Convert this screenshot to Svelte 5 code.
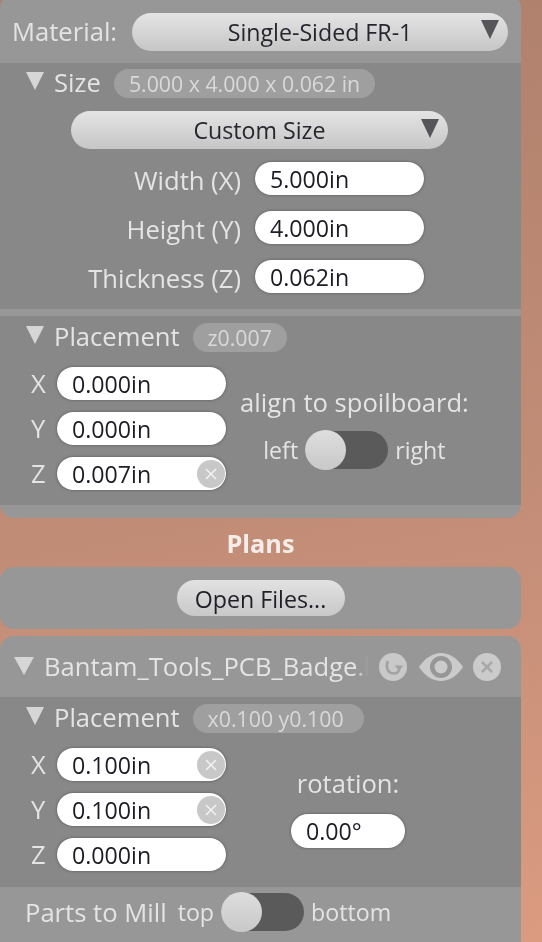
<script>
    const sizeRows = [
        { label: "Width (X)", value: "5.000in" },
        { label: "Height (Y)", value: "4.000in" },
        { label: "Thickness (Z)", value: "0.062in" },
    ];
    const boardPlacement = [
        { label: "X", value: "0.000in" },
        { label: "Y", value: "0.000in" },
        { label: "Z", value: "0.007in", clear: true },
    ];
    const planPlacement = [
        { label: "X", value: "0.100in", clear: true },
        { label: "Y", value: "0.100in", clear: true },
        { label: "Z", value: "0.000in" },
    ];
</script>

{#snippet clearIcon(cls)}
    <svg class={cls} viewBox="0 0 28 28" aria-hidden="true">
        <circle cx="14" cy="14" r="14" />
        <path d="M9 9l10 10M19 9L9 19" />
    </svg>
{/snippet}

{#snippet sectionHead(title, summary)}
    <div class="section-head">
        <span class="tri"></span>
        <span class="title">{title}</span>
        <span class="pill">{summary}</span>
    </div>
{/snippet}

{#snippet xyz(rows)}
    <div class="xyz">
        {#each rows as row}
            <div class="xyz-row">
                <span class="axis">{row.label}</span>
                <div class="field">
                    {row.value}
                    {#if row.clear}
                        {@render clearIcon("clear")}
                    {/if}
                </div>
            </div>
        {/each}
    </div>
{/snippet}

<div class="sidebar">
    <section class="panel first">
        <div class="material">
            <span>Material:</span>
            <div class="select wide">Single-Sided FR-1<i></i></div>
        </div>
        <div class="inner size">
            {@render sectionHead("Size", "5.000 x 4.000 x 0.062 in")}
            <div class="select custom">Custom Size<i></i></div>
            {#each sizeRows as row}
                <div class="size-row">
                    <span class="size-label">{row.label}</span>
                    <div class="field">{row.value}</div>
                </div>
            {/each}
        </div>
        <div class="inner placement">
            {@render sectionHead("Placement", "z0.007")}
            <div class="place-body">
                {@render xyz(boardPlacement)}
                <div class="align">
                    <span>align to spoilboard:</span>
                    <div class="toggle-row">
                        <span class="end">left</span>
                        <div class="toggle"><b></b></div>
                        <span class="end">right</span>
                    </div>
                </div>
            </div>
        </div>
    </section>

    <h2>Plans</h2>

    <section class="panel open">
        <button>Open Files...</button>
    </section>

    <section class="panel plan">
        <div class="plan-head">
            <span class="tri big"></span>
            <span class="name">Bantam_Tools_PCB_Badge.brd</span>
            <svg class="ico" viewBox="0 0 28 28" aria-hidden="true">
                <circle cx="14" cy="14" r="14" fill="#c9c9c9" />
                <path d="M9 8C6.500 13 8 20.500 15 20.500c3 0 5-2 5.500-5" fill="none" stroke="#a2a2a2" stroke-width="2.600" />
                <path d="M15.500 12.500h9l-4.500 5z" fill="#a2a2a2" />
            </svg>
            <svg class="eye" viewBox="0 0 44 28" aria-hidden="true">
                <path d="M0 14C6 5 14 0 22 0s16 5 22 14c-6 9-14 14-22 14S6 23 0 14z" fill="#cbcbcb" />
                <circle cx="22" cy="14" r="11" fill="#979797" />
                <circle cx="22" cy="14" r="6.500" fill="#cbcbcb" />
            </svg>
            {@render clearIcon("ico head-clear")}
        </div>
        <div class="inner plan-place">
            {@render sectionHead("Placement", "x0.100 y0.100\u00a0")}
            <div class="place-body">
                {@render xyz(planPlacement)}
                <div class="rotation">
                    <span>rotation:</span>
                    <div class="field small">0.00°</div>
                </div>
            </div>
        </div>
        <div class="parts">
            <span class="parts-label">Parts to Mill</span>
            <span class="end">top</span>
            <div class="toggle"><b></b></div>
            <span class="end">bottom</span>
        </div>
    </section>
</div>

<style>
    :global(body) {
        margin: 0;
        height: 942px;
        overflow: hidden;
        background: linear-gradient(170deg, #ad7f6b 0%, #c48e78 60%, #db9b81 100%);
    }

    .sidebar {
        width: 521px;
        font-family: "Open Sans", "Noto Sans", sans-serif;
        font-size: 25.600px;
        line-height: 31px;
        color: #e4e4e4;
        filter: blur(0.5px);
    }

    .panel {
        background: #979797;
        border-radius: 14px;
        overflow: hidden;
    }

    .first {
        margin-top: -6px;
        height: 524px;
    }

    .material {
        height: 69px;
        padding: 6px 13px 0 12px;
        box-sizing: border-box;
        display: flex;
        align-items: center;
        gap: 15px;
    }

    .select {
        position: relative;
        height: 38px;
        border-radius: 19px;
        background: linear-gradient(#e4e4e4, #c6c6c6);
        color: #26262e;
        text-align: center;
        line-height: 38px;
        font-size: 23.200px;
        box-sizing: border-box;
    }

    .select i {
        position: absolute;
        right: 9px;
        top: 7.500px;
        border-left: 9.500px solid transparent;
        border-right: 9.500px solid transparent;
        border-top: 19px solid #55555a;
    }

    .wide {
        flex: 1;
    }

    .custom {
        width: 377px;
        margin: 13px 0 13px 71px;
    }

    .inner {
        background: #888;
        box-sizing: border-box;
    }

    .size {
        height: 246px;
        padding-top: 6px;
    }

    .placement {
        height: 189px;
        margin-top: 7px;
        padding-top: 7px;
    }

    .section-head {
        height: 29px;
        display: flex;
        align-items: center;
        padding-left: 26px;
    }

    .tri {
        width: 0;
        height: 0;
        border-left: 9px solid transparent;
        border-right: 9px solid transparent;
        border-top: 18px solid #d6d6d6;
        margin-top: -6px;
    }

    .title {
        margin-left: 10px;
        margin-top: -3px;
    }

    .pill {
        margin-left: 13px;
        height: 29px;
        padding: 0 15px;
        border-radius: 15px;
        background: #9f9f9f;
        color: #d9d9d9;
        font-size: 21.300px;
        line-height: 30px;
        white-space: pre;
    }

    .size-row {
        display: grid;
        grid-template-columns: 241px 169px;
        column-gap: 14px;
        align-items: center;
        margin-bottom: 16px;
    }

    .size-label {
        text-align: right;
        height: 33px;
        line-height: 37px;
    }

    .field {
        position: relative;
        width: 169px;
        height: 33px;
        box-sizing: border-box;
        padding-left: 15px;
        border-radius: 17px;
        background: #fff;
        box-shadow: 0 0 3px #555;
        color: #1c1c24;
        font-size: 23.200px;
        line-height: 34px;
    }

    .field.small {
        width: 114px;
        height: 34px;
    }

    .clear {
        position: absolute;
        right: 1px;
        top: 2.500px;
        width: 28px;
        height: 28px;
    }

    .clear circle {
        fill: #c8c8c8;
    }

    .clear path {
        fill: none;
        stroke: #f0f0f0;
        stroke-width: 1.700;
    }

    .place-body {
        display: flex;
        padding: 15px 0 0 31px;
    }

    .xyz {
        display: flex;
        flex-direction: column;
        gap: 12px;
    }

    .xyz-row {
        display: flex;
        align-items: center;
    }

    .axis {
        width: 26px;
    }

    .align {
        margin-left: 14px;
        display: flex;
        flex-direction: column;
        align-items: center;
        padding-top: 20px;
    }

    .toggle-row {
        display: flex;
        align-items: center;
        gap: 7px;
        margin-top: 13px;
    }

    .end {
        font-size: 23.200px;
    }

    .toggle {
        position: relative;
        width: 83px;
        height: 38px;
        border-radius: 19px;
        background: #5a5a5a;
        flex: none;
    }

    .toggle b {
        position: absolute;
        left: 0;
        top: -1px;
        width: 41px;
        height: 40px;
        border-radius: 50%;
        background: linear-gradient(#dedede, #c8c8c8);
    }

    h2 {
        margin: 0;
        height: 49px;
        line-height: 50px;
        text-align: center;
        font-size: 25.300px;
        font-weight: 700;
        color: #f3ece8;
    }

    .open {
        height: 62px;
        display: flex;
        justify-content: center;
        align-items: center;
        margin-bottom: 7px;
    }

    button {
        width: 168px;
        height: 36px;
        padding: 2px 0 0;
        border: 0;
        border-radius: 18px;
        background: linear-gradient(#e2e2e2, #c8c8c8);
        color: #1f1f28;
        font-family: inherit;
        font-size: 23.200px;
    }

    .plan {
        height: 330px;
    }

    .plan-head {
        height: 61px;
        display: flex;
        align-items: center;
        padding-left: 14px;
    }

    .tri.big {
        flex: none;
        border-left-width: 10px;
        border-right-width: 10px;
        margin-top: -1px;
    }

    .name {
        margin-left: 10px;
        width: 324px;
        flex: none;
        overflow: hidden;
        white-space: nowrap;
        mask-image: linear-gradient(to right, #000 calc(100% - 12px), transparent);
    }

    .ico {
        width: 28px;
        height: 28px;
        margin-left: 11px;
        flex: none;
    }

    .eye {
        width: 44px;
        height: 28px;
        margin-left: 12px;
        flex: none;
    }

    .head-clear {
        margin-left: 10px;
    }

    .head-clear circle {
        fill: #cbcbcb;
    }

    .head-clear path {
        fill: none;
        stroke: #a8a8a8;
        stroke-width: 2.500;
    }

    .plan-place {
        height: 190px;
        padding-top: 7px;
    }

    .rotation {
        margin-left: 65px;
        display: flex;
        flex-direction: column;
        align-items: center;
        padding-top: 20px;
        gap: 15px;
    }

    .parts {
        height: 50px;
        display: flex;
        align-items: center;
        padding: 0 0 0 25px;
        gap: 7px;
    }

    .parts-label {
        margin-right: 4px;
    }
</style>
